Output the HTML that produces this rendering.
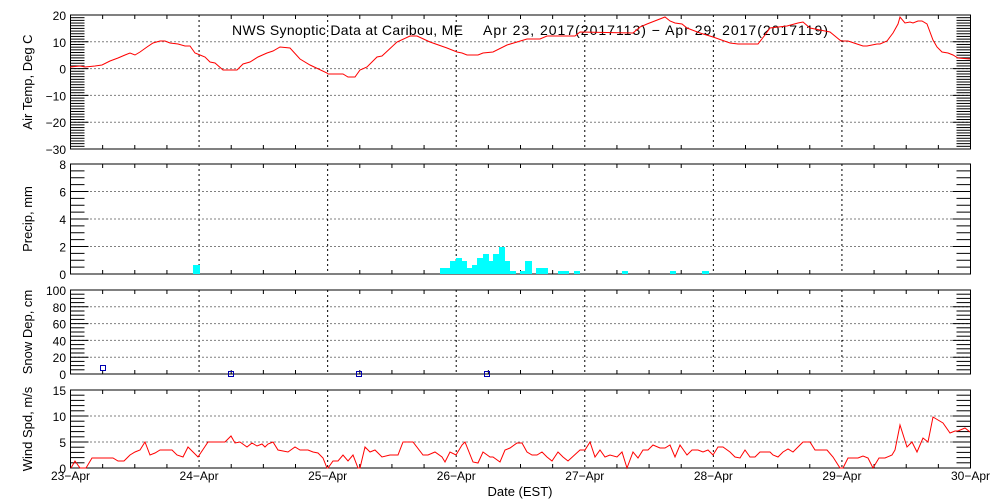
<!DOCTYPE html>
<html><head><meta charset="utf-8"><style>
body{margin:0;background:#fff;width:1000px;height:500px;overflow:hidden}
svg{display:block}
text{font-family:"Liberation Sans",sans-serif;fill:#000}
</style></head><body>
<svg id="s" width="1000" height="500" xmlns="http://www.w3.org/2000/svg"></svg>
<script>
const s=document.getElementById('s');let h='';
const X0=70.5,X1=970.5,DX=(X1-X0)/7;
function panel(top,bot,vmin,vmax,major,minor,labels,ylab,ylabY){
  const sc=(bot-top)/(vmax-vmin);const Y=v=>bot-(v-vmin)*sc;
  for(let v=vmin+major;v<vmax-1e-6;v+=major){h+=`<line x1="${X0}" x2="${X1}" y1="${Y(v)}" y2="${Y(v)}" stroke="#000" stroke-dasharray="1,3"/>`;}
  for(let d=1;d<7;d++){const x=X0+d*DX;h+=`<line x1="${x}" x2="${x}" y1="${top}" y2="${bot}" stroke="#000" stroke-dasharray="2,3"/>`;}
  for(let v=vmin;v<=vmax+1e-6;v+=minor){const y=Y(v);const isM=Math.abs(((v-vmin)/major)-Math.round((v-vmin)/major))<1e-6;const L=isM?18:14;
    h+=`<line x1="${X0}" x2="${X0+L}" y1="${y}" y2="${y}" stroke="#000"/><line x1="${X1-L}" x2="${X1}" y1="${y}" y2="${y}" stroke="#000"/>`;}
  for(let i=1;i<28;i++){const x=X0+i*DX/4;const L=(i%4==0)?0:4;if(L)h+=`<line x1="${x}" x2="${x}" y1="${top}" y2="${top+L}" stroke="#000"/><line x1="${x}" x2="${x}" y1="${bot}" y2="${bot-L}" stroke="#000"/>`;}
  h+=`<rect x="${X0}" y="${top}" width="${X1-X0}" height="${bot-top}" fill="none" stroke="#000"/>`;
  for(const v of labels){h+=`<text x="66" y="${Y(v)+5}" font-size="12" text-anchor="end">${v<0?'\u2212'+(-v):v}</text>`;}
  h+=`<text transform="translate(32,${ylabY}) rotate(-90)" font-size="13" text-anchor="middle">${ylab}</text>`;
  return Y;
}
panel(15,149,-30,20,10,1,[20,10,0,-10,-20,-30],'Air Temp, Deg C',82);
panel(164,274,0,8,2,0.5,[8,6,4,2,0],'Precip, mm',219);
panel(290,374,0,100,20,5,[100,80,60,40,20,0],'Snow Dep, cm',332);
panel(390,468,0,15,5,1,[15,10,5,0],'Wind Spd, m/s',429);
const bars=[[193,200,265],[440,450,268],[450,456,261],[456,462,258],[462,467,261],[467,472,268],[472,477,265],[477,483,258],[483,489,254],[489,493,261],[493,499,254],[499,505,247],[505,510,261],[510,516,271],[520,525,271],[525,532,261],[536,548,268],[558,569,271],[574,580,271],[622,628,271],[670,676,271],[702,709,271]];
for(const b of bars)h+=`<rect x="${b[0]}" y="${b[2]}" width="${b[1]-b[0]}" height="${274-b[2]}" fill="#00ffff"/>`;
for(const p of [[103,368],[231,374],[359,374],[487,374]])h+=`<rect x="${p[0]-2.5}" y="${p[1]-2.5}" width="5" height="5" fill="none" stroke="#0000b0"/>`;
h+=`<text x="232" y="35" font-size="14" textLength="231" lengthAdjust="spacing">NWS Synoptic Data at Caribou, ME</text>`;
h+=`<text x="483" y="35" font-size="14" textLength="345" lengthAdjust="spacing">Apr 23, 2017(2017113) \u2212 Apr 29, 2017(2017119)</text>`;
const T=[[70,67],[80,66],[85,67],[95,66],[102,65],[110,61],[118,58],[125,55],[130,53],[135,55],[140,52],[147,47],[153,43],[160,41],[165,41],[170,43],[178,44],[185,46],[190,46],[195,53],[200,55],[205,57],[210,62],[215,63],[223,70],[237,70],[243,64],[250,62],[258,57],[267,53],[273,51],[280,47],[290,48],[300,59],[310,65],[327,73],[328,74],[343,74],[348,77],[355,77],[360,70],[367,67],[377,57],[382,56],[397,42],[410,36],[417,36],[430,42],[447,48],[457,52],[462,53],[467,55],[478,55],[483,53],[493,52],[507,45],[517,42],[527,39],[540,39],[547,36],[575,36],[580,32],[633,33],[640,27],[647,24],[665,17],[670,21],[675,23],[682,24],[687,28],[700,33],[713,37],[730,43],[738,44],[758,44],[765,35],[770,28],[787,26],[798,23],[803,22],[810,28],[820,30],[830,32],[841,41],[848,41],[857,44],[863,46],[867,46],[877,44],[880,44],[887,41],[893,33],[898,24],[900,17],[905,23],[910,22],[913,23],[918,21],[922,21],[927,24],[933,40],[937,47],[942,52],[948,53],[953,55],[958,58],[970,59]];
h+=`<polyline points="${T.map(p=>p.join(',')).join(' ')}" fill="none" stroke="#f00"/>`;
const W=[[71,468],[75,461],[80,468],[86,468],[92,458],[113,458],[118,461],[124,461],[130,455],[135,452],[140,450],[145,442],[150,455],[155,453],[160,450],[172,450],[177,455],[183,457],[188,447],[198,457],[208,442],[225,442],[231,436],[235,443],[240,442],[247,447],[252,443],[257,446],[262,444],[265,447],[268,444],[273,442],[278,450],[288,452],[295,447],[300,450],[308,450],[313,452],[318,453],[323,458],[327,468],[328,468],[333,461],[338,461],[343,455],[348,461],[353,455],[358,468],[360,468],[365,447],[370,452],[375,450],[382,457],[390,455],[398,455],[403,442],[408,442],[413,442],[423,455],[428,455],[435,452],[442,457],[445,462],[450,452],[456,455],[462,445],[465,442],[473,462],[478,463],[483,452],[490,457],[493,457],[500,462],[505,450],[510,448],[517,443],[522,443],[527,452],[532,455],[537,455],[542,452],[547,457],[552,461],[558,452],[563,457],[568,461],[580,450],[585,450],[590,442],[595,457],[600,450],[605,457],[610,455],[617,457],[622,452],[627,468],[633,452],[638,458],[643,450],[648,450],[653,445],[660,448],[665,448],[670,445],[675,457],[680,445],[687,455],[692,450],[698,450],[703,452],[708,450],[713,455],[718,447],[723,447],[730,452],[735,457],[740,458],[745,450],[750,457],[755,457],[760,452],[770,452],[773,455],[778,457],[783,452],[788,449],[793,452],[798,447],[803,442],[810,442],[815,450],[827,450],[833,457],[840,468],[843,468],[848,458],[858,458],[863,456],[868,458],[873,468],[879,458],[885,458],[892,455],[895,450],[900,425],[907,447],[912,442],[917,452],[923,438],[928,442],[933,417],[938,420],[943,423],[950,433],[955,431],[958,431],[965,428],[970,432]];
h+=`<polyline points="${W.map(p=>p.join(',')).join(' ')}" fill="none" stroke="#f00"/>`;
const days=['23','24','25','26','27','28','29','30'];
days.forEach((d,i)=>{h+=`<text x="${X0+i*DX}" y="480" font-size="12" text-anchor="middle">${d}\u2212Apr</text>`;});
h+=`<text x="520" y="496" font-size="13" text-anchor="middle">Date (EST)</text>`;
s.innerHTML=h;
</script>
</body></html>
